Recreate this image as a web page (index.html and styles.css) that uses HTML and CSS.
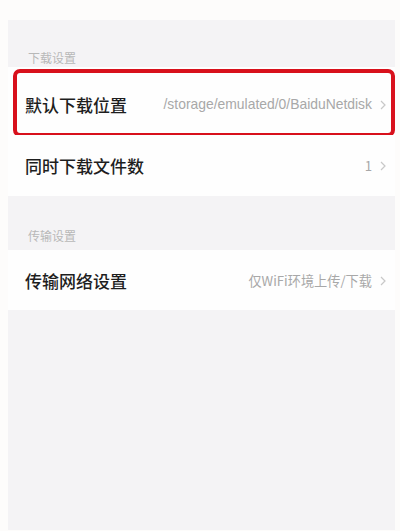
FILE: index.html
```html
<!DOCTYPE html>
<html lang="zh-CN">
<head>
<meta charset="utf-8">
<link rel="stylesheet" href="styles.css">
</head>
<body>
<div class="panel">
  <div class="group-title first">下载设置</div>
  <div class="row row-first">
    <span class="label">默认下载位置</span>
    <span class="value">/storage/emulated/0/BaiduNetdisk</span>
    <span class="chev"><svg width="6" height="10" viewBox="0 0 6 10"><path d="M1 1 L5 5 L1 9" fill="none" stroke="#c8c8c8" stroke-width="1.2"/></svg></span>
    <div class="highlight"></div>
  </div>
  <div class="row row-second">
    <span class="label">同时下载文件数</span>
    <span class="value">1</span>
    <span class="chev"><svg width="6" height="10" viewBox="0 0 6 10"><path d="M1 1 L5 5 L1 9" fill="none" stroke="#c8c8c8" stroke-width="1.2"/></svg></span>
  </div>
  <div class="group-title second">传输设置</div>
  <div class="row row-third">
    <span class="label">传输网络设置</span>
    <span class="value">仅WiFi环境上传/下载</span>
    <span class="chev"><svg width="6" height="10" viewBox="0 0 6 10"><path d="M1 1 L5 5 L1 9" fill="none" stroke="#c8c8c8" stroke-width="1.2"/></svg></span>
  </div>
</div>
</body>
</html>
```

FILE: styles.css
```css
html, body {
  margin: 0;
  padding: 0;
  background: #fdfcfb;
  font-family: "Noto Sans CJK SC", "Noto Sans", sans-serif;
}
.panel {
  margin: 20px 5px 0 8px;
  height: 510px;
  background: #f4f3f5;
  display: flex;
  flex-direction: column;
}
.group-title {
  font-size: 12px;
  color: #b8b8b8;
  padding-left: 20px;
  display: flex;
  align-items: flex-end;
  line-height: 14px;
}
.group-title.first {
  height: 45px;
  padding-bottom: 2px;
}
.group-title.second {
  height: 47px;
  padding-bottom: 7px;
}
.row {
  position: relative;
  background: #fefefe;
  display: flex;
  align-items: center;
  padding: 0 9px 0 17px;
}
.row-first {
  height: 68px;
  padding-top: 6px;
  box-sizing: border-box;
}
.row-second {
  height: 61px;
}
.row-third {
  height: 60px;
}
.label {
  font-size: 17px;
  color: #1e1e1e;
  font-weight: 500;
  flex: 1;
  white-space: nowrap;
}
.value {
  font-family: "Noto Sans CJK SC", "Liberation Sans", sans-serif;
  font-size: 13.2px;
  color: #a8a8a8;
  white-space: nowrap;
}
.row-first .value {
  font-family: "Liberation Sans", sans-serif;
  font-size: 13.9px;
}
.chev {
  display: flex;
  align-items: center;
  margin-left: 8px;
  padding-top: 1px;
}
.highlight {
  position: absolute;
  left: 5px;
  top: 2px;
  width: 382px;
  height: 68px;
  box-sizing: border-box;
  border: 4px solid #d8101c;
  border-radius: 7px;
  pointer-events: none;
}
```
